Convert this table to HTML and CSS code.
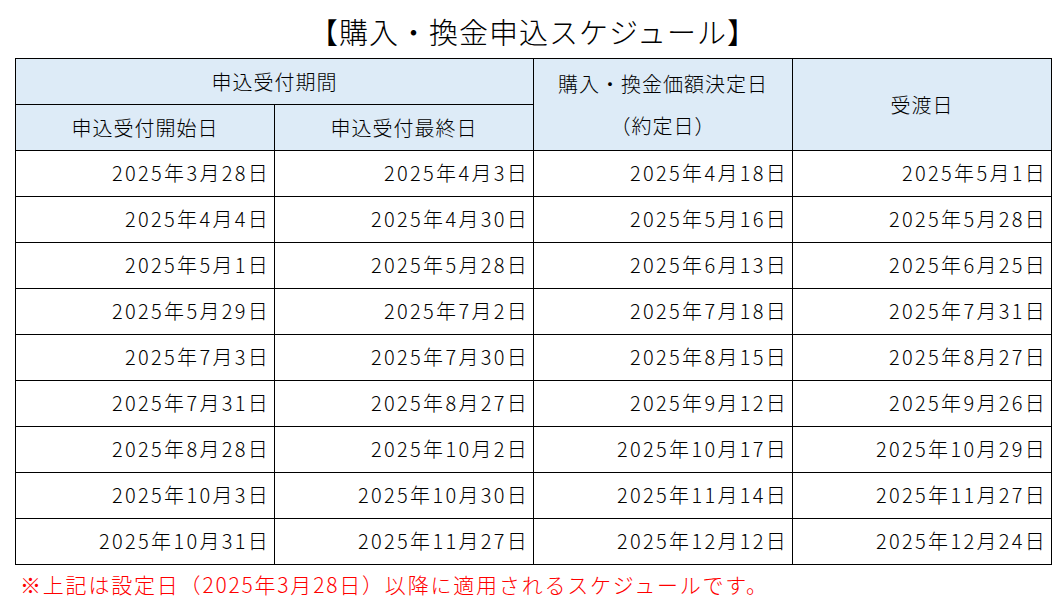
FILE: index.html
```html
<!DOCTYPE html>
<html lang="ja">
<head>
<meta charset="utf-8">
<link rel="stylesheet" href="styles.css">
</head>
<body>
<div class="page">
  <h1 class="title">【購入・換金申込スケジュール】</h1>
  <table class="sched">
    <colgroup><col class="c"><col class="c"><col class="c"><col class="c"></colgroup>
    <thead>
      <tr>
        <th colspan="2">申込受付期間</th>
        <th rowspan="2" class="two">購入・換金価額決定日<br>（約定日）</th>
        <th rowspan="2">受渡日</th>
      </tr>
      <tr>
        <th>申込受付開始日</th>
        <th>申込受付最終日</th>
      </tr>
    </thead>
    <tbody>
      <tr><td>2025年3月28日</td><td>2025年4月3日</td><td>2025年4月18日</td><td>2025年5月1日</td></tr>
      <tr><td>2025年4月4日</td><td>2025年4月30日</td><td>2025年5月16日</td><td>2025年5月28日</td></tr>
      <tr><td>2025年5月1日</td><td>2025年5月28日</td><td>2025年6月13日</td><td>2025年6月25日</td></tr>
      <tr><td>2025年5月29日</td><td>2025年7月2日</td><td>2025年7月18日</td><td>2025年7月31日</td></tr>
      <tr><td>2025年7月3日</td><td>2025年7月30日</td><td>2025年8月15日</td><td>2025年8月27日</td></tr>
      <tr><td>2025年7月31日</td><td>2025年8月27日</td><td>2025年9月12日</td><td>2025年9月26日</td></tr>
      <tr><td>2025年8月28日</td><td>2025年10月2日</td><td>2025年10月17日</td><td>2025年10月29日</td></tr>
      <tr><td>2025年10月3日</td><td>2025年10月30日</td><td>2025年11月14日</td><td>2025年11月27日</td></tr>
      <tr><td>2025年10月31日</td><td>2025年11月27日</td><td>2025年12月12日</td><td>2025年12月24日</td></tr>
    </tbody>
  </table>
  <p class="note">※上記は設定日（2025年3月28日）以降に適用されるスケジュールです。</p>
</div>
</body>
</html>
```
FILE: styles.css
```css
html, body {
  margin: 0;
  padding: 0;
  background: #ffffff;
}
body {
  font-family: "Noto Sans CJK JP", "Noto Sans", sans-serif;
  font-weight: 300;
  color: #000000;
}
.page {
  width: 1036px;
  padding: 0 0 0 15px;
}
.title {
  margin: 0;
  height: 58px;
  line-height: 62px;
  font-size: 29px;
  font-weight: 300;
  letter-spacing: 1px;
  text-align: center;
}
.sched {
  border-collapse: collapse;
  table-layout: fixed;
  width: 1036px;
  font-size: 20px;
}
.sched .c {
  width: 259px;
}
.sched th, .sched td {
  border: 1px solid #000000;
  height: 45px;
  padding: 0;
  font-weight: 300;
}
.sched th {
  background: #ddebf7;
  text-align: center;
  letter-spacing: 1px;
}
.sched th.two {
  line-height: 42px;
}
.sched td {
  height: 43px;
  text-align: right;
  padding: 0 4px 2px 0;
  letter-spacing: 2.3px;
}
.note {
  margin: 4px 0 0 5px;
  font-size: 21px;
  letter-spacing: 1.8px;
  color: #ff0000;
}
```
